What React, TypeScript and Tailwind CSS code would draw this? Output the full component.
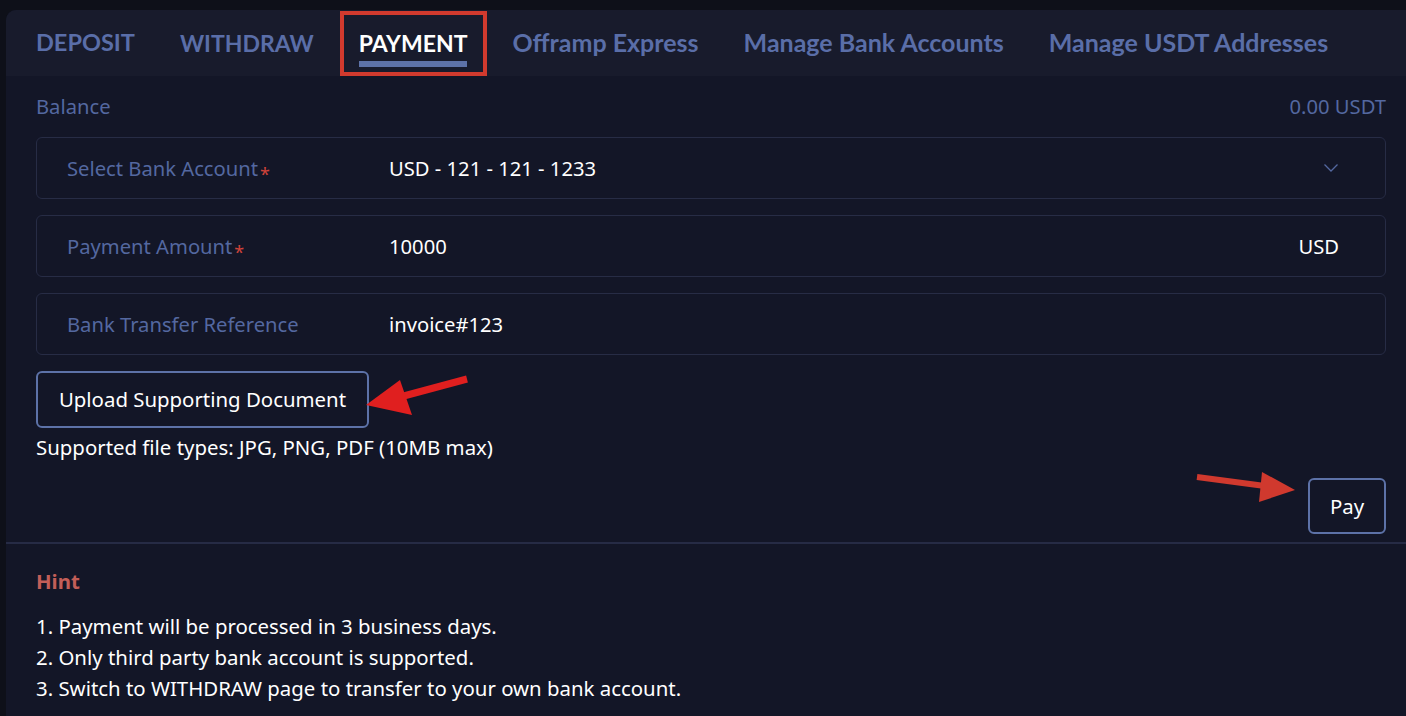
import React from "react";

const tabFont = { fontFamily: "Lato, 'Open Sans', sans-serif" };

function Field({ label, required, value, right }: { label: string; required?: boolean; value: string; right?: React.ReactNode }) {
  return (
    <div className="flex h-[62px] items-center rounded-[6px] border border-[#272c45] bg-[#131627]">
      <div className="w-[352px] shrink-0 pl-[30px] text-[20.2px] text-[#5468a0]">
        {label}
        {required && <span className="relative top-[5px] ml-[2px] text-[18px] text-[#d0433a]">*</span>}
      </div>
      <div className="flex-1 text-[20.2px] text-white">{value}</div>
      {right}
    </div>
  );
}

export default function App() {
  return (
    <div className="relative h-[716px] w-[1406px] overflow-hidden bg-[#0e1019] pl-[6px] pt-[10px]" style={{ fontFamily: "'Noto Sans', sans-serif" }}>
      <div className="h-full w-full overflow-hidden rounded-tl-[10px] bg-[#131627]">
        {/* Tabs */}
        <div className="flex h-[66px] items-stretch gap-[45px] bg-[#181b2c] pl-[30px] font-bold" style={tabFont}>
          <span className="flex items-center text-[23.5px] text-[#5a6ea8]">DEPOSIT</span>
          <span className="flex items-center text-[23px] text-[#5a6ea8]">WITHDRAW</span>
          <span className="relative flex items-center text-[23px] text-white">
            PAYMENT
            <span className="absolute left-0 right-0 top-[51px] h-[6px] bg-[#5d72a8]" />
            <span className="absolute -left-[19px] -right-[20px] top-[1px] bottom-0 border-[4px] border-[#d13a2e]" />
          </span>
          <span className="flex items-center text-[25px] text-[#5a6ea8]">Offramp Express</span>
          <span className="flex items-center text-[25px] text-[#5a6ea8]">Manage Bank Accounts</span>
          <span className="flex items-center text-[25px] text-[#5a6ea8]">Manage USDT Addresses</span>
        </div>

        {/* Form */}
        <div className="pl-[30px] pr-[20px] pt-[16px]">
          <div className="flex h-[28px] items-center justify-between text-[20.2px] text-[#5468a0]">
            <span>Balance</span>
            <span>0.00 USDT</span>
          </div>
          <div className="mt-[17px] flex flex-col gap-[16px]">
            <Field
              label="Select Bank Account"
              required
              value="USD - 121 - 121 - 1233"
              right={
                <svg className="mr-[46px]" width="16" height="10" viewBox="0 0 16 10" fill="none">
                  <path d="M1.5 1.5 L8 8 L14.5 1.5" stroke="#5468a0" strokeWidth="1.3" />
                </svg>
              }
            />
            <Field label="Payment Amount" required value="10000" right={<span className="mr-[46px] text-[20.2px] text-white">USD</span>} />
            <Field label="Bank Transfer Reference" value="invoice#123" />
          </div>
          <button className="mt-[16px] flex h-[57px] w-[333px] items-center justify-center rounded-[6px] border-2 border-[#5d72a8] text-[20.4px] text-white">
            Upload Supporting Document
          </button>
          <div className="mt-[6px] h-[26px] text-[20.4px] leading-[26px] text-white">Supported file types: JPG, PNG, PDF (10MB max)</div>
          <div className="mt-[18px] flex justify-end">
            <button className="flex h-[56px] w-[78px] items-center justify-center rounded-[6px] border-2 border-[#5d72a8] text-[20.4px] text-white">
              Pay
            </button>
          </div>
        </div>

        <div className="mt-[8px] border-t-2 border-[#262b45]" />

        {/* Hint */}
        <div className="pl-[30px] pt-[24px]">
          <div className="h-[27px] text-[20.4px] font-bold leading-[27px] text-[#c25e58]">Hint</div>
          <div className="mt-[16px] text-[20.4px] leading-[31px] text-white">
            <div>1. Payment will be processed in 3 business days.</div>
            <div>2. Only third party bank account is supported.</div>
            <div>3. Switch to WITHDRAW page to transfer to your own bank account.</div>
          </div>
        </div>
      </div>

      {/* Annotation arrows */}
      <svg className="pointer-events-none absolute left-0 top-0" width="1406" height="716" viewBox="0 0 1406 716">
        <line x1="467" y1="379" x2="400" y2="397" stroke="#e01f1f" strokeWidth="7" />
        <polygon points="366,405 400,380 412,415" fill="#e01f1f" />
        <line x1="1197" y1="477" x2="1265" y2="486" stroke="#d0392e" strokeWidth="6" />
        <polygon points="1295,490 1262,472 1259,502" fill="#d0392e" />
      </svg>
    </div>
  );
}
